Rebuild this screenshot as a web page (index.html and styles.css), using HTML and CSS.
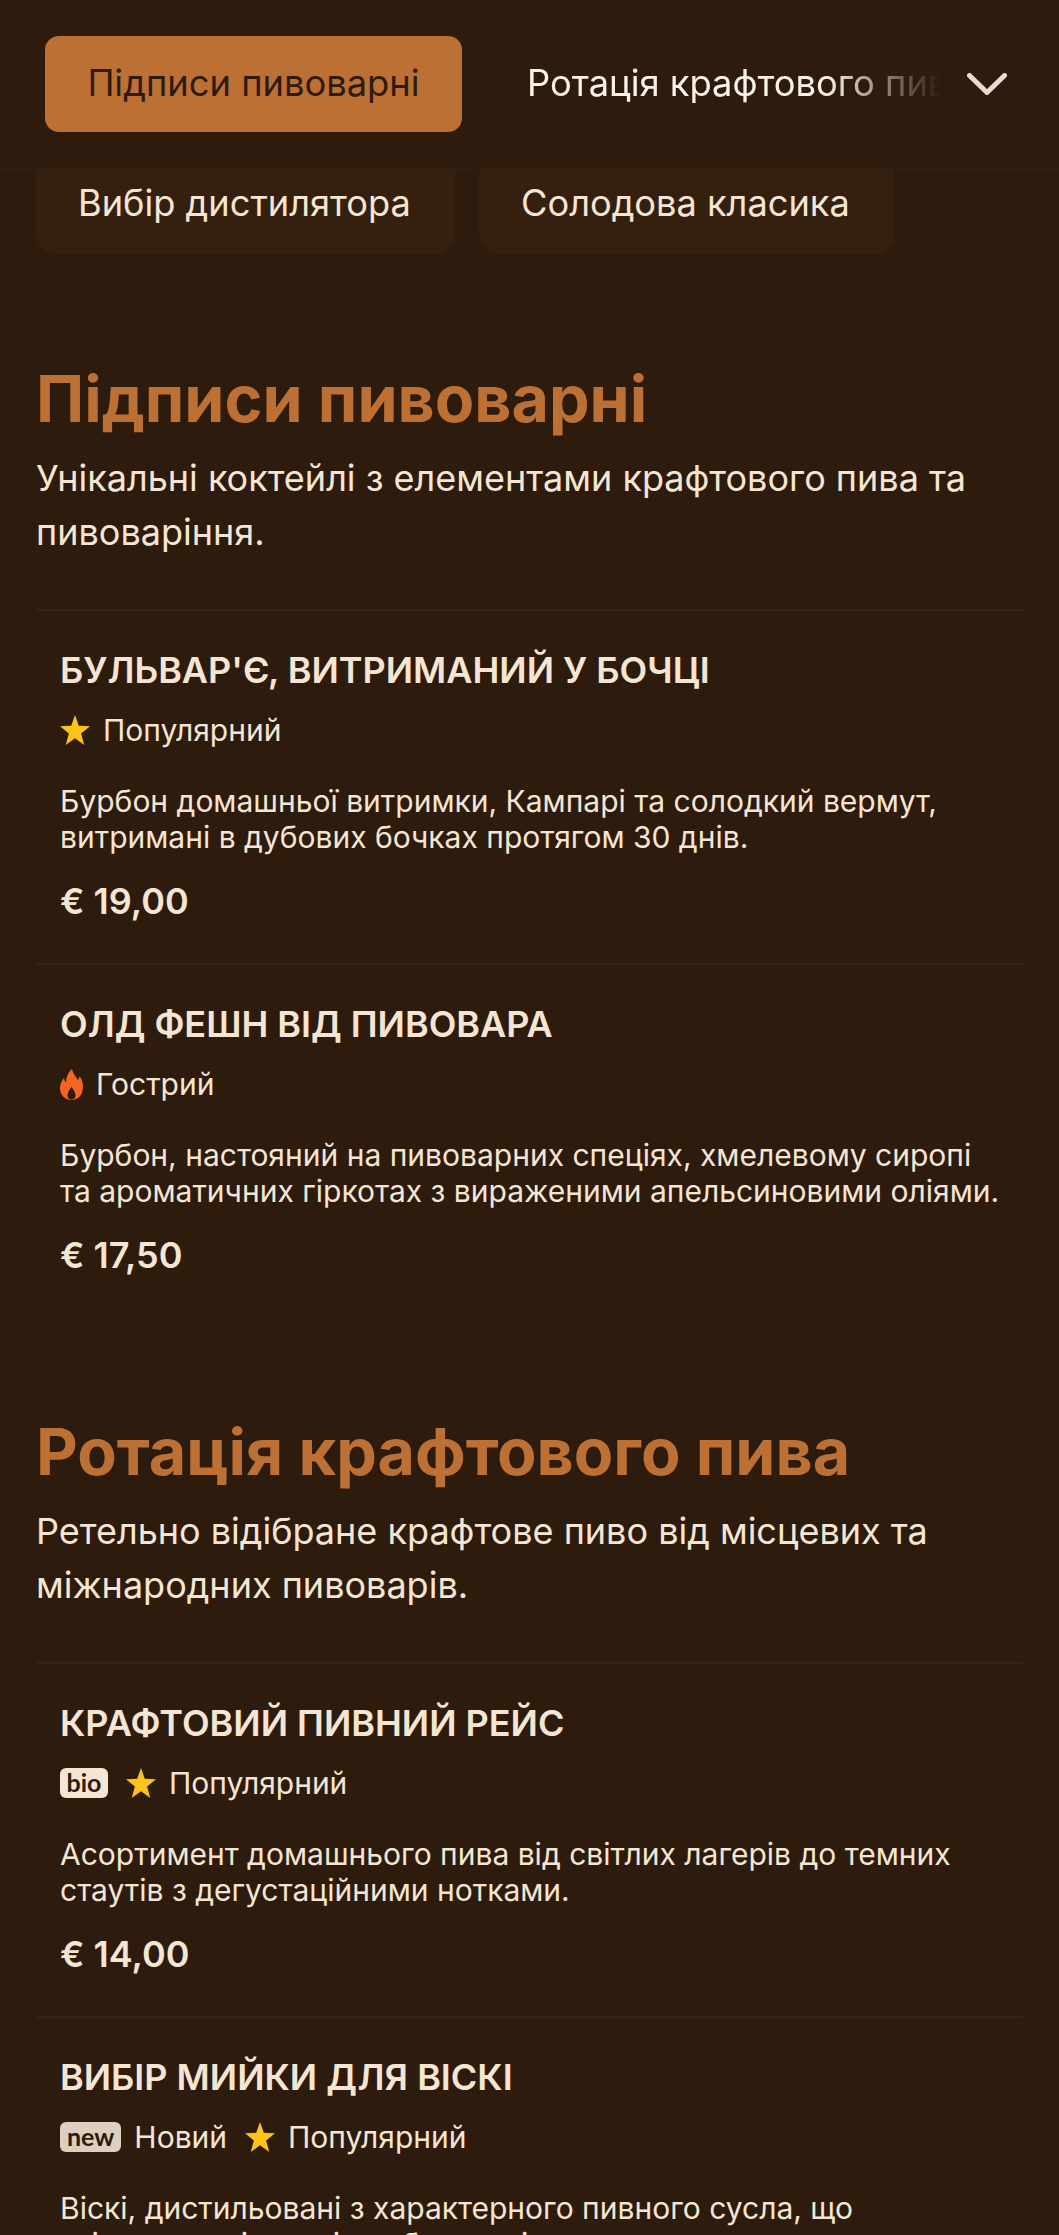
FILE: index.html
```html
<!DOCTYPE html>
<html lang="uk">
<head>
<meta charset="utf-8">
<title>Меню</title>
<link rel="stylesheet" href="styles.css">
</head>
<body>
<header class="topbar">
  <nav class="tabs">
    <a class="tab tab-active">Підписи пивоварні</a>
    <a class="tab tab-next">Ротація крафтового пива</a>
    <svg class="chev" viewBox="0 0 40 22" width="40" height="22"><path d="M2.500 2.500 L20 19.500 L37.500 2.500" fill="none" stroke="#e8dccf" stroke-width="5" stroke-linecap="round" stroke-linejoin="round"/></svg>
  </nav>
</header>
<div class="subtabs">
  <a class="chip">Вибір дистилятора</a>
  <a class="chip">Солодова класика</a>
</div>
<main class="menu">
  <section class="section">
    <h2>Підписи пивоварні</h2>
    <p class="lead">Унікальні коктейлі з елементами крафтового пива та пивоваріння.</p>
    <article class="item">
      <h3>БУЛЬВАР'Є, ВИТРИМАНИЙ У БОЧЦІ</h3>
      <div class="tags"><span class="tag"><svg class="star" viewBox="0.5 0.8 23 22" preserveAspectRatio="none"><path d="M12 .8l2.900 7.900 8.600.4-6.800 5.300 2.400 8.400L12 17.900l-7.100 4.900 2.400-8.400L.5 9.100l8.600-.4z"/></svg>Популярний</span></div>
      <p class="desc">Бурбон домашньої витримки, Кампарі та солодкий вермут, витримані в дубових бочках протягом 30 днів.</p>
      <div class="price">€ 19,00</div>
    </article>
    <article class="item">
      <h3>ОЛД ФЕШН ВІД ПИВОВАРА</h3>
      <div class="tags"><span class="tag"><svg class="flame" viewBox="0 0 23 31"><path fill-rule="evenodd" d="M12 0C13 5 16 8 18 11C19 9.500 19.500 8.500 19.500 7C22 10 23 14 23 18C23 26 18 31 11.500 31C5 31 0 26 0 19C0 14.500 2 11.500 4 9C4.300 11 5 12.500 6 13.500C6 8 8 3.500 12 0ZM11.500 18C9 21 7.500 24 7.500 26.500C7.500 29 9.300 30.500 11.500 30.500C13.700 30.500 15.500 29 15.500 26.500C15.500 24 14 21 11.500 18Z"/></svg>Гострий</span></div>
      <p class="desc">Бурбон, настояний на пивоварних спеціях, хмелевому сиропі та ароматичних гіркотах з вираженими апельсиновими оліями.</p>
      <div class="price">€ 17,50</div>
    </article>
  </section>
  <section class="section">
    <h2>Ротація крафтового пива</h2>
    <p class="lead">Ретельно відібране крафтове пиво від місцевих та міжнародних пивоварів.</p>
    <article class="item">
      <h3>КРАФТОВИЙ ПИВНИЙ РЕЙС</h3>
      <div class="tags"><span class="badge badge-bio">bio</span><span class="tag"><svg class="star" viewBox="0.5 0.8 23 22" preserveAspectRatio="none"><path d="M12 .8l2.900 7.900 8.600.4-6.800 5.300 2.400 8.400L12 17.900l-7.100 4.900 2.400-8.400L.5 9.100l8.600-.4z"/></svg>Популярний</span></div>
      <p class="desc">Асортимент домашнього пива від світлих лагерів до темних стаутів з дегустаційними нотками.</p>
      <div class="price">€ 14,00</div>
    </article>
    <article class="item">
      <h3>ВИБІР МИЙКИ ДЛЯ ВІСКІ</h3>
      <div class="tags"><span class="tag"><span class="badge badge-new">new</span>Новий</span><span class="tag"><svg class="star" viewBox="0.5 0.8 23 22" preserveAspectRatio="none"><path d="M12 .8l2.900 7.900 8.600.4-6.800 5.300 2.400 8.400L12 17.900l-7.100 4.900 2.400-8.400L.5 9.100l8.600-.4z"/></svg>Популярний</span></div>
      <p class="desc">Віскі, дистильовані з характерного пивного сусла, що<br>втілюють унікальні особливості.</p>
    </article>
  </section>
</main>
</body>
</html>
```
FILE: styles.css
```css
* { box-sizing: border-box; }
html, body { margin: 0; padding: 0; }
body {
  background: #2d1b0e;
  color: #f5e6d3;
  font-family: Inter, "Liberation Sans", sans-serif;
  height: 2235px;
  overflow: hidden;
}
h2, h3, p { margin: 0; }
.topbar {
  height: 170px;
  background: #2d1b0e;
  border-bottom: 1px solid #38200f;
  padding: 36px 0 0 45px;
}
.tabs { display: flex; align-items: flex-start; }
.tab {
  display: block;
  font-size: 36.3px;
  line-height: 94px;
  height: 96px;
  white-space: nowrap;
}
.tab-active {
  width: 417px;
  text-align: center;
  background: #bd7034;
  color: #2d1b0e;
  border-radius: 14px;
}
.tab-next {
  margin-left: 65px;
  width: 414px;
  overflow: hidden;
  color: #fbf3ea;
  -webkit-mask-image: linear-gradient(to right, #000 72%, transparent 100%);
  mask-image: linear-gradient(to right, #000 72%, transparent 100%);
}
.chev { margin: 37px 0 0 26px; flex: none; }
.subtabs {
  display: flex;
  gap: 24px;
  padding: 0 36px;
  height: 84px;
}
.chip {
  display: block;
  height: 84px;
  padding: 0 42px;
  width: 419px;
  font-size: 36.2px;
  line-height: 66px;
  background: #351f0f;
  border-radius: 0 0 20px 20px;
  white-space: nowrap;
}
.chip + .chip { width: 415px; }
.menu { padding: 0 36px; }
.section { padding-top: 109px; }
.section + .section { padding-top: 99px; }
h2 {
  font-size: 64.500px;
  line-height: 72px;
  font-weight: 750;
  color: #bd7034;
}
.lead {
  margin-top: 16px;
  font-size: 36px;
  line-height: 54px;
  color: #f5e6d3;
}
.item {
  padding: 36px 20px 39px 24px;
  border-top: 2px solid #3a2110;
}
.lead + .item { margin-top: 50px; }
h3 {
  font-size: 36px;
  line-height: 46px;
  font-weight: 600;
}
.tags {
  display: flex;
  align-items: center;
  gap: 18px;
  margin-top: 14px;
  height: 46px;
  font-size: 30px;
}
.tag { display: flex; align-items: center; gap: 13px; }
.star { width: 30px; height: 30px; fill: #fcc419; flex: none; }
.flame { width: 23px; height: 31px; fill: #f4661f; flex: none; }
.badge {
  display: inline-block;
  height: 30px;
  line-height: 29px;
  padding: 0 7px;
  border-radius: 6px;
  font-family: Lato, Inter, sans-serif;
  font-size: 25px;
  font-weight: 700;
  color: #2d1b0e;
}
.badge-bio { background: #f5e6d3; padding: 0 6.500px; }
.badge-new { background: #dccfc0; }
.desc {
  margin-top: 30px;
  font-size: 30px;
  line-height: 36px;
}
.price {
  margin-top: 23px;
  font-size: 36px;
  line-height: 46px;
  font-weight: 600;
}
```
